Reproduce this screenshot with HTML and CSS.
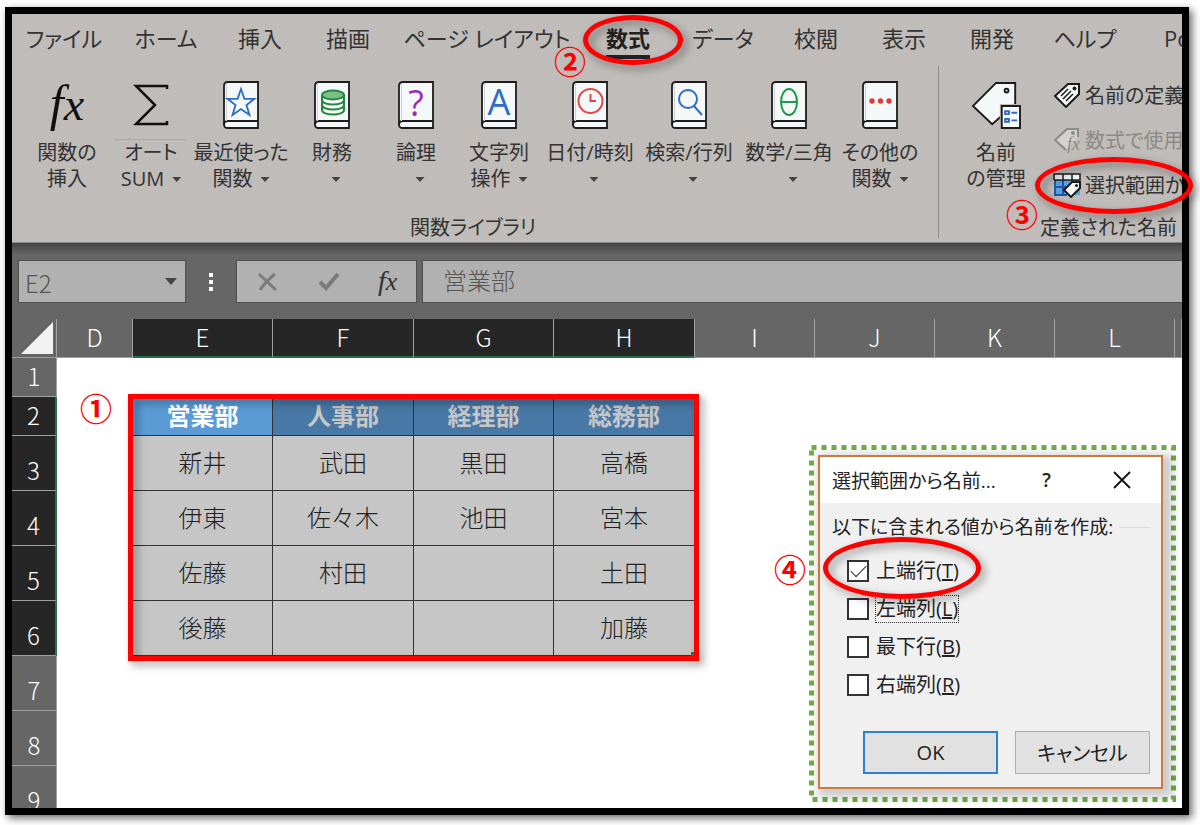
FILE: index.html
```html
<!DOCTYPE html>
<html lang="ja">
<head>
    <meta charset="UTF-8">
    <meta name="viewport" content="width=device-width, initial-scale=1.0">
    <title>選択範囲から名前を作成</title>
    <link rel="stylesheet" href="styles.css">
</head>
<body>

    <svg class="defs" aria-hidden="true">
        <symbol id="book" viewBox="0 0 36 48">
            <path d="M5 1H35V47H4Q1 47 1 43V5Q1 1 5 1Z" fill="#f4f8f8" stroke="#1c1c1c" stroke-width="1.800"/>
            <path d="M1 44Q1 40 5 40H35" fill="none" stroke="#1c1c1c" stroke-width="1.800"/>
            <path d="M3.500 2V40" stroke="#d0d2d2" stroke-width="1"/>
        </symbol>
    </svg>

    <div class="frame">
        <div class="excel">
            <div class="ribbon">
                <div class="tabs">
                    <button class="tab">ファイル</button>
                    <button class="tab">ホーム</button>
                    <button class="tab">挿入</button>
                    <button class="tab">描画</button>
                    <button class="tab">ページ レイアウト</button>
                    <button class="tab active"><span>数式</span></button>
                    <button class="tab">データ</button>
                    <button class="tab">校閲</button>
                    <button class="tab">表示</button>
                    <button class="tab">開発</button>
                    <button class="tab">ヘルプ</button>
                    <button class="tab last">Power Pivot</button>
                </div>

                <div class="groups">
                    <div class="group library">
                        <div class="tools">
                            <button class="tool">
                                <span class="icon fx">f<small>x</small></span>
                                <span>関数の</span><span>挿入</span>
                            </button>
                            <button class="tool split">
                                <svg class="icon" viewBox="0 0 36 48"><path d="M34 8V5H3L22 24L3 43H34V40" fill="none" stroke="#111" stroke-width="2.500"/></svg>
                                <span>オート</span><span>SUM<i class="caret"></i></span>
                            </button>
                            <button class="tool">
                                <svg class="icon" viewBox="0 0 36 48"><use href="#book"/><path d="M18 8L21.400 17.800H31.500L23.500 24L26.500 34L18 28L9.500 34L12.500 24L4.500 17.800H14.600Z" fill="none" stroke="#2f6bc7" stroke-width="1.800"/></svg>
                                <span>最近使った</span><span>関数<i class="caret"></i></span>
                            </button>
                            <button class="tool">
                                <svg class="icon" viewBox="0 0 36 48"><use href="#book"/><path d="M8 14V29C8 35 30 35 30 29V14" fill="#fff" stroke="#1e8a3e" stroke-width="2"/><path d="M8 19C8 25 30 25 30 19M8 24C8 30 30 30 30 24" fill="none" stroke="#1e8a3e" stroke-width="2"/><ellipse cx="19" cy="14" rx="11" ry="4.500" fill="#7dbd86" stroke="#1e8a3e" stroke-width="2"/></svg>
                                <span>財務</span><span><i class="caret alone"></i></span>
                            </button>
                            <button class="tool">
                                <svg class="icon" viewBox="0 0 36 48"><use href="#book"/><text x="18" y="35" class="mark purple">?</text></svg>
                                <span>論理</span><span><i class="caret alone"></i></span>
                            </button>
                            <button class="tool">
                                <svg class="icon" viewBox="0 0 36 48"><use href="#book"/><text x="18" y="34" class="mark blue">A</text></svg>
                                <span>文字列</span><span>操作<i class="caret"></i></span>
                            </button>
                            <button class="tool">
                                <svg class="icon" viewBox="0 0 36 48"><use href="#book"/><circle cx="18.500" cy="20" r="12" fill="none" stroke="#e04a4a" stroke-width="2"/><path d="M18.500 13V20H24" fill="none" stroke="#e04a4a" stroke-width="2"/></svg>
                                <span>日付/時刻</span><span><i class="caret alone"></i></span>
                            </button>
                            <button class="tool">
                                <svg class="icon" viewBox="0 0 36 48"><use href="#book"/><circle cx="17" cy="18" r="9" fill="none" stroke="#2f6bc7" stroke-width="2"/><path d="M23 25L31 34" stroke="#2f6bc7" stroke-width="2"/></svg>
                                <span>検索/行列</span><span><i class="caret alone"></i></span>
                            </button>
                            <button class="tool">
                                <svg class="icon" viewBox="0 0 36 48"><use href="#book"/><ellipse cx="18" cy="21" rx="8" ry="13" fill="none" stroke="#1e9a4a" stroke-width="2"/><path d="M10 21H26" stroke="#1e9a4a" stroke-width="2"/></svg>
                                <span>数学/三角</span><span><i class="caret alone"></i></span>
                            </button>
                            <button class="tool">
                                <svg class="icon" viewBox="0 0 36 48"><use href="#book"/><g fill="#e03a3a"><circle cx="10" cy="20" r="2.700"/><circle cx="18.500" cy="20" r="2.700"/><circle cx="27" cy="20" r="2.700"/></g></svg>
                                <span>その他の</span><span>関数<i class="caret"></i></span>
                            </button>
                        </div>
                        <div class="group-name">関数ライブラリ</div>
                    </div>

                    <div class="group names">
                        <div class="tools">
                            <button class="tool">
                                <svg class="icon wide" viewBox="0 0 52 50">
                                    <path d="M26 2H46V24L22 45L2 26Z" fill="#f4f8f8" stroke="#1c1c1c" stroke-width="2"/>
                                    <circle cx="37" cy="10" r="2" fill="none" stroke="#1c1c1c" stroke-width="2"/>
                                    <path d="M30 24H52V50H30Z" fill="#c0bcb9"/>
                                    <path d="M32 26H51V49H32Z" fill="#f4f8f8" stroke="#1c1c1c" stroke-width="2"/>
                                    <path d="M35.500 31.500H39.500V34.500H35.500ZM35.500 39.500H39.500V42.500H35.500ZM42 33H48M42 41H48" fill="none" stroke="#2f6bc7" stroke-width="2"/>
                                </svg>
                                <span>名前</span><span>の管理</span>
                            </button>
                            <div class="commands">
                                <button class="command">
                                    <svg viewBox="0 0 28 26"><path d="M15 2H26V12L13 25L2 14Z" fill="#f4f8f8" stroke="#1c1c1c" stroke-width="2"/><circle cx="21.500" cy="6.500" r="2" fill="#1c1c1c"/><path d="M8 14L15 7M10 17L18 9M13 19L20 12" stroke="#1c1c1c" stroke-width="1.500"/></svg>
                                    名前の定義
                                </button>
                                <button class="command" disabled>
                                    <svg viewBox="0 0 28 26"><path d="M13 23L2 13L14 2H25V10" fill="#d4d2d0" stroke="#8c8a88" stroke-width="2"/><circle cx="20" cy="6" r="2" fill="#8c8a88"/><text x="14" y="23" class="mini-fx">fx</text></svg>
                                    数式で使用
                                </button>
                                <button class="command">
                                    <svg viewBox="0 0 28 26"><path d="M2 2H27V23H2Z" fill="#5ba0dc"/><path d="M2 2H27V8H2Z" fill="#f4f8f8"/><path d="M2 8V23H14M2 15H18M10 8V23M19 8V12" fill="none" stroke="#1f57a8" stroke-width="2"/><path d="M1 8V2H27V8H1M10 2V8M19 2V8" fill="none" stroke="#1c1c1c" stroke-width="1.500"/><path d="M19 10H27V16L18 25L11 18Z" fill="#f4f8f8" stroke="#1c1c1c" stroke-width="2"/><circle cx="23.500" cy="13.500" r="1.500" fill="#1c1c1c"/></svg>
                                    選択範囲から作成
                                </button>
                            </div>
                        </div>
                        <div class="group-name">定義された名前</div>
                    </div>
                </div>
            </div>

            <div class="formula-bar">
                <div class="name-box">
                    <input type="text" value="E2" aria-label="名前ボックス">
                    <i class="caret"></i>
                </div>
                <div class="dots"><i></i><i></i><i></i></div>
                <div class="formula-buttons">
                    <button aria-label="キャンセル"><svg viewBox="0 0 24 20"><path d="M3 2L20 18M19 2Q10 9 4 18" fill="none" stroke="#7b7b7b" stroke-width="3"/></svg></button>
                    <button aria-label="入力"><svg viewBox="0 0 24 20"><path d="M3 10L9 16L21 2" fill="none" stroke="#7b7b7b" stroke-width="4"/></svg></button>
                    <button class="fx" aria-label="関数の挿入">f<small>x</small></button>
                </div>
                <input class="formula" type="text" value="営業部" aria-label="数式バー">
            </div>

            <table class="sheet">
                <colgroup>
                    <col class="c-head"><col class="c-d">
                    <col class="c-e"><col class="c-f"><col class="c-e"><col class="c-f">
                    <col class="c-i"><col class="c-i"><col class="c-i"><col class="c-i"><col>
                </colgroup>
                <thead>
                    <tr>
                        <th class="corner"><svg viewBox="0 0 32 32"><path d="M32 0V32H0Z" fill="#f1f1f1"/></svg></th>
                        <th>D</th>
                        <th class="on">E</th><th class="on">F</th><th class="on">G</th><th class="on">H</th>
                        <th>I</th><th>J</th><th>K</th><th>L</th><th></th>
                    </tr>
                </thead>
                <tbody>
                    <tr class="short"><th>1</th><td colspan="10"></td></tr>
                    <tr class="short title"><th class="on">2</th><td></td><td class="cell current">営業部</td><td class="cell">人事部</td><td class="cell">経理部</td><td class="cell">総務部</td><td colspan="5"></td></tr>
                    <tr><th class="on">3</th><td></td><td class="cell">新井</td><td class="cell">武田</td><td class="cell">黒田</td><td class="cell">高橋</td><td colspan="5"></td></tr>
                    <tr><th class="on">4</th><td></td><td class="cell">伊東</td><td class="cell">佐々木</td><td class="cell">池田</td><td class="cell">宮本</td><td colspan="5"></td></tr>
                    <tr><th class="on">5</th><td></td><td class="cell">佐藤</td><td class="cell">村田</td><td class="cell"></td><td class="cell">土田</td><td colspan="5"></td></tr>
                    <tr><th class="on">6</th><td></td><td class="cell">後藤</td><td class="cell"></td><td class="cell"></td><td class="cell">加藤</td><td colspan="5"></td></tr>
                    <tr><th>7</th><td colspan="10"></td></tr>
                    <tr><th>8</th><td colspan="10"></td></tr>
                    <tr><th>9</th><td colspan="10"></td></tr>
                </tbody>
            </table>

            <div class="dialog-area">
                <svg class="dotted"><rect x="2.500" y="2.500" width="362" height="352" fill="none" stroke="#70ad47" stroke-width="5" stroke-dasharray="5 5"/></svg>
                <form class="dialog">
                    <div class="dialog-title">
                        <span class="dialog-name">選択範囲から名前...</span>
                        <button type="button" aria-label="ヘルプ">?</button>
                        <button type="button" aria-label="閉じる"><svg viewBox="0 0 18 18"><path d="M1 1L17 17M17 1L1 17" stroke="#111" stroke-width="1.800"/></svg></button>
                    </div>
                    <fieldset>
                        <legend>以下に含まれる値から名前を作成:</legend>
                        <div class="check"><input type="checkbox" id="top" checked><label for="top">上端行(<u>T</u>)</label></div>
                        <div class="check"><input type="checkbox" id="left"><label for="left" class="focus">左端列(<u>L</u>)</label></div>
                        <div class="check"><input type="checkbox" id="bottom"><label for="bottom">最下行(<u>B</u>)</label></div>
                        <div class="check"><input type="checkbox" id="right"><label for="right">右端列(<u>R</u>)</label></div>
                    </fieldset>
                    <div class="dialog-buttons">
                        <button type="button" class="default">OK</button>
                        <button type="button">キャンセル</button>
                    </div>
                </form>
            </div>
        </div>

        <!-- 手順の目印 -->
        <div class="mark-box"></div>
        <div class="ring ring-tab"></div>
        <div class="ring ring-command"></div>
        <div class="ring ring-check"></div>
        <span class="step step1">①</span>
        <span class="step step2">②</span>
        <span class="step step3">③</span>
        <span class="step step4">④</span>
    </div>

</body>
</html>
```
FILE: styles.css
```css
* {
    box-sizing: border-box;
}
body {
    margin: 0;
    padding: 7px 11px 10px 5px;
    height: 100vh;
    background-color: #fff;
    font-family: "Noto Sans CJK JP", sans-serif;
    font-size: 20px;
    font-weight: 300;
    color: #222;
    overflow: hidden;
}
button, input {
    font: inherit;
    color: inherit;
}
button {
    background: none;
    border: none;
    padding: 0;
    white-space: nowrap;
}
.defs {
    display: none;
}
.frame {
    position: relative;
    height: 100%;
    border: 7px solid #000;
    box-shadow: 3px 3px 8px rgba(0, 0, 0, 0.6);
}
.excel {
    position: relative;
    height: 100%;
    overflow: hidden;
    background-color: #fff;
}

/* ribbon */
.ribbon, .dialog {
    font-family: "Open Sans", "Noto Sans CJK JP", sans-serif;
    font-weight: 400;
    font-feature-settings: "palt";
}
.ribbon {
    height: 229px;
    background-color: #c0bcb9;
    border-bottom: 1px solid #8a8886;
    color: #333;
}
.tabs {
    display: grid;
    grid-template-columns: 104px 100px 88px 88px 190px 92px 98px 88px 88px 88px 98px auto;
    height: 52px;
    font-size: 22px;
}
.tab {
    display: flex;
    justify-content: center;
    line-height: 49px;
}
.tab.active {
    font-weight: 700;
    color: #222;
}
.tab.active span {
    height: 45px;
    border-bottom: 4px solid #222;
}
.tab.last {
    justify-content: flex-start;
    padding-left: 30px;
}
.groups {
    display: flex;
    height: 176px;
}
.group {
    display: flex;
    flex-direction: column;
    flex-shrink: 0;
}
.library {
    padding: 0 17px 0 13px;
    border-right: 1px solid #8f8c8a;
    margin-bottom: 4px;
}
.tools {
    display: grid;
    flex: none;
    height: 147px;
    padding-top: 15px;
    align-items: start;
}
.library .tools {
    grid-template-columns: 84px 84px 96px 86px 82px 84px 98px 100px 100px 82px;
}
.names .tools {
    grid-template-columns: 114px auto;
}
.tool {
    display: flex;
    flex-direction: column;
    align-items: center;
    line-height: 26px;
}
.tool span {
    height: 26px;
}
.tool .icon {
    width: 36px;
    height: 48px;
    margin-bottom: 11px;
}
.tool .wide {
    width: 52px;
}
.tool .fx {
    width: auto;
}
.split .icon {
    margin-bottom: 10px;
}
.split .icon + span {
    border-top: 1px solid #aaa7a4;
    width: 72px;
    height: 27px;
}
.fx {
    font-family: "Liberation Serif", serif;
    font-style: italic;
    font-weight: 400;
    line-height: 44px;
    font-size: 50px;
    color: #111;
}
.fx small {
    font-size: 46px;
}
.mark {
    font-size: 36px;
    font-weight: 400;
    text-anchor: middle;
}
.purple {
    fill: #9b2fae;
}
.blue {
    fill: #2f6bc7;
}
.mini-fx {
    font-family: "Liberation Serif", serif;
    font-size: 18px;
    font-style: italic;
    fill: #8c8a88;
}
.caret {
    display: inline-block;
    width: 9px;
    height: 5px;
    margin-left: 8px;
    vertical-align: 4px;
    background-color: #444;
    clip-path: polygon(0 0, 100% 0, 50% 100%);
}
.commands {
    display: flex;
    flex-direction: column;
    margin-top: -9px;
}
.command {
    display: flex;
    align-items: center;
    gap: 4px;
    height: 45px;
}
.command svg {
    width: 28px;
    height: 26px;
}
.command:disabled {
    color: #8c8a88;
}
.group-name {
    flex: none;
    line-height: 30px;
    text-align: center;
}
.names .group-name {
    text-align: left;
    padding-left: 101px;
}

/* formula bar */
.formula-bar {
    display: flex;
    height: 76px;
    padding: 17px 0 16px 6px;
    background: linear-gradient(#444, #666 12px);
    font-size: 24px;
    color: #555;
}
.name-box {
    display: flex;
    align-items: center;
    width: 168px;
    padding-right: 8px;
    background-color: #b1b1b1;
    border: 1px solid #505050;
}
.name-box input {
    flex: 1;
    min-width: 0;
    padding: 2px 6px 0;
    background: none;
    border: none;
}
.name-box .caret {
    width: 12px;
    height: 7px;
}
.dots {
    display: flex;
    flex-direction: column;
    justify-content: center;
    gap: 3px;
    padding: 0 23px;
}
.dots i {
    width: 4px;
    height: 4px;
    background-color: #fff;
}
.formula-buttons {
    display: flex;
    justify-content: space-around;
    align-items: center;
    width: 181px;
    background-color: #b1b1b1;
    border: 1px solid #505050;
}
.formula-buttons svg {
    display: block;
    width: 24px;
    height: 20px;
}
.formula-buttons .fx {
    font-size: 28px;
    line-height: 28px;
    color: #333;
}
.formula-buttons .fx small {
    font-size: 26px;
}
.formula {
    flex: 1;
    min-width: 0;
    margin-left: 5px;
    padding: 0 20px 4px;
    background-color: #b1b1b1;
    border: 1px solid #505050;
    border-right: none;
}

/* sheet */
.sheet {
    width: 100%;
    table-layout: fixed;
    border-collapse: separate;
    border-spacing: 0;
    font-size: 24px;
}
.c-head {
    width: 45px;
}
.c-d {
    width: 76px;
}
.c-e {
    width: 140px;
}
.c-f {
    width: 141px;
}
.c-i {
    width: 120px;
}
.sheet tr {
    height: 55px;
}
.sheet thead tr, .sheet .short {
    height: 39px;
}
.sheet th, .sheet td {
    padding: 0 0 2px;
    line-height: 34px;
    text-align: center;
}
.sheet th {
    padding-bottom: 3px;
    background-color: #666;
    border-right: 1px solid #a0a0a0;
    border-bottom: 1px solid #a0a0a0;
    color: #fff;
    font-weight: 300;
    vertical-align: bottom;
}
.sheet th.on {
    background-color: #262626;
}
.sheet thead th.on {
    padding-bottom: 2px;
    border-bottom: 2px solid #217346;
}
.sheet tbody th.on {
    border-right: 2px solid #217346;
}
.sheet .corner svg {
    display: block;
    width: 32px;
    height: 32px;
    margin: 0 3px 0 auto;
}
.sheet .cell {
    background-color: #c6c6c6;
    border-right: 1px solid #333;
    border-bottom: 1px solid #333;
}
.sheet .title .cell {
    background-color: #4878a6;
    color: #c6c6c6;
    font-weight: 700;
}
.sheet .title .current {
    background-color: #5b9bd5;
    color: #fff;
}

/* dialog */
.dialog-area {
    position: absolute;
    left: 797px;
    top: 431px;
    padding: 10px 13px 13px 9px;
}
.dotted {
    position: absolute;
    left: 0;
    top: 0;
    width: 100%;
    height: 100%;
}
.dialog {
    position: relative;
    width: 345px;
    background-color: #f0f0f0;
    border: 2px solid #d07a3a;
    box-shadow: 5px 4px 9px 5px rgba(0, 0, 0, 0.2);
}
.dialog-title {
    display: flex;
    align-items: center;
    height: 46px;
    padding: 0 30px 0 12px;
    background-color: #fff;
    font-size: 19px;
}
.dialog-name {
    flex: 1;
}
.dialog-title button {
    margin-left: 62px;
    font-weight: 600;
}
.dialog-title button:first-of-type {
    margin-left: 0;
}
.dialog-title svg {
    display: block;
    width: 18px;
    height: 18px;
}
.dialog fieldset {
    margin: 0;
    padding: 0 10px 0 12px;
    border: none;
}
.dialog legend {
    display: flex;
    align-items: center;
    gap: 6px;
    width: 100%;
    padding: 0;
    font-size: 19px;
    line-height: 49px;
    white-space: nowrap;
}
.dialog legend::after {
    content: "";
    flex: 1;
    height: 1px;
    background-color: #dcdcdc;
}
.check {
    display: flex;
    align-items: center;
    gap: 6px;
    height: 38px;
    padding-left: 15px;
}
.check input {
    appearance: none;
    width: 22px;
    height: 22px;
    margin: 0;
    background-color: #fff;
    border: 2px solid #333;
}
.check input:checked::after {
    content: "";
    display: block;
    width: 14px;
    height: 7px;
    margin: 3px 2px;
    border-left: 1px solid #333;
    border-bottom: 1px solid #333;
    transform: rotate(-45deg);
}
.check label {
    line-height: 26px;
    border: 1px solid transparent;
}
.check .focus {
    border: 1px dotted #333;
}
.dialog-buttons {
    display: flex;
    justify-content: flex-end;
    gap: 17px;
    padding: 27px 11px 13px;
}
.dialog-buttons button {
    width: 135px;
    height: 43px;
    background-color: #e1e1e1;
    border: 1px solid #adadad;
}
.dialog-buttons .default {
    border: 2px solid #2a82d4;
}

/* step marks laid over the window */
.mark-box, .ring, .step {
    position: absolute;
    pointer-events: none;
}
.mark-box {
    left: 116px;
    top: 380px;
    width: 571px;
    height: 267px;
    border: 5px solid #f00;
    filter: drop-shadow(4px 4px 4px rgba(0, 0, 0, 0.4));
}
.mark-box::after {
    content: "";
    position: absolute;
    right: 0;
    bottom: 0;
    width: 3px;
    height: 4px;
    background-color: #217346;
}
.ring {
    border: 5px solid #f00;
    border-radius: 50%;
    filter: drop-shadow(4px 4px 4px rgba(0, 0, 0, 0.4));
}
.ring-tab {
    left: 571px;
    top: 1px;
    width: 100px;
    height: 50px;
}
.ring-command {
    left: 1023px;
    top: 143px;
    width: 158px;
    height: 57px;
}
.ring-check {
    left: 811px;
    top: 523px;
    width: 158px;
    height: 62px;
}
.step {
    font-size: 32px;
    font-weight: 700;
    line-height: 32px;
    color: #f00;
}
.step1 {
    left: 68px;
    top: 377px;
}
.step2 {
    left: 542px;
    top: 30px;
}
.step3 {
    left: 994px;
    top: 183px;
}
.step4 {
    left: 762px;
    top: 538px;
}
```
